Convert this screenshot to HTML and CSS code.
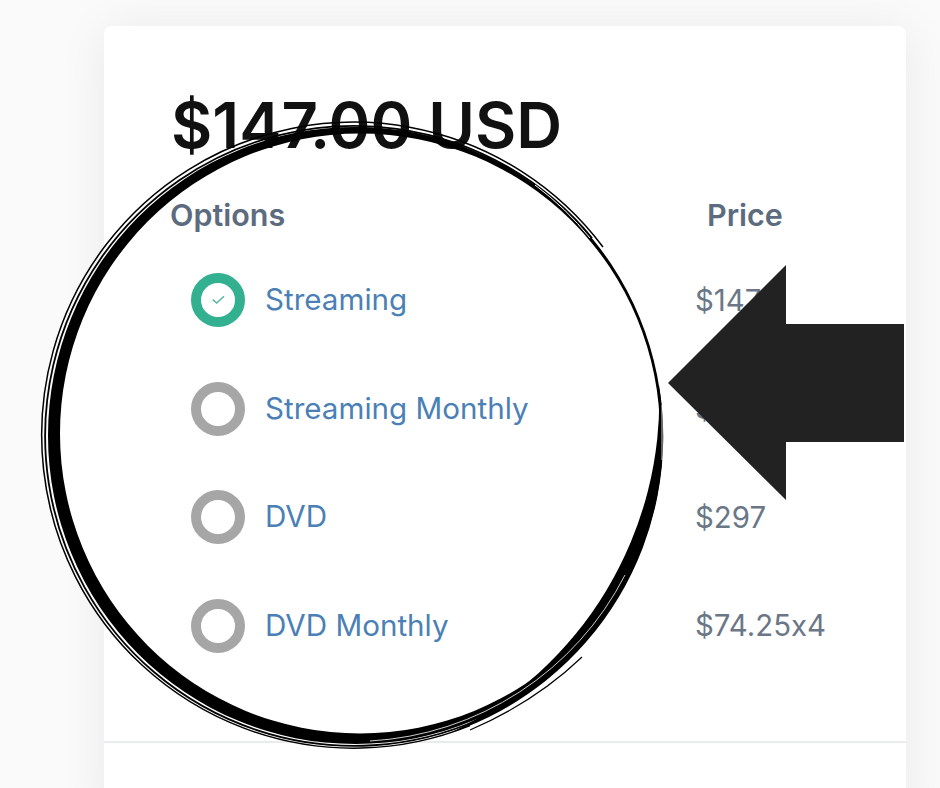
FILE: index.html
```html
<!DOCTYPE html>
<html lang="en">

<head>
    <meta charset="UTF-8">
    <title>Checkout options</title>
    <link rel="stylesheet" href="styles.css">
</head>

<body>
    <div class="spot"></div>

    <div class="card">
        <div class="card-body">
            <h1 class="total">$147.00 USD</h1>

            <div class="options">
                <div class="head">Options</div>
                <div class="head head-price">Price</div>

                <div class="option">
                    <span class="radio radio-on">
                        <svg width="14" height="12" viewBox="0 0 14 12">
                            <path d="M1.7 5.7 L5.7 9 L13 2.3" fill="none" stroke="#58b69d" stroke-width="1.5" />
                        </svg>
                    </span>
                    <span class="option-name">Streaming</span>
                </div>
                <div class="price">$147</div>

                <div class="option">
                    <span class="radio"></span>
                    <span class="option-name">Streaming Monthly</span>
                </div>
                <div class="price">$</div>

                <div class="option">
                    <span class="radio"></span>
                    <span class="option-name">DVD</span>
                </div>
                <div class="price">$297</div>

                <div class="option">
                    <span class="radio"></span>
                    <span class="option-name">DVD Monthly</span>
                </div>
                <div class="price">$74.25x4</div>
            </div>
        </div>
        <div class="divider"></div>
    </div>

    <!-- hand drawn ring and arrow sit on top of the card -->
    <svg class="markup" width="940" height="788" viewBox="0 0 940 788">
        <!-- main brush stroke, thin at upper right and heavy at lower left -->
        <path fill-rule="evenodd" fill="#000"
            d="M48 435.5 A307.5 308.5 0 1 1 663 435.5 A307.5 308.5 0 1 1 48 435.5 Z
               M60 433.5 A300 300 0 1 0 660 433.5 A300 300 0 1 0 60 433.5 Z" />
        <!-- loose outer hairlines -->
        <path d="M603 247 A312 313 0 1 0 470 725.6" fill="none" stroke="#000" stroke-width="1.5" />
        <path d="M592 238 A309 310 0 1 0 480 719" fill="none" stroke="#000" stroke-width="1.8" />
        <path d="M659 385 A313 313 0 0 1 450 733 A370 370 0 0 0 659 385 Z" fill="#000" />
        <path d="M582 657 Q535 702 470 730" fill="none" stroke="#000" stroke-width="1.2" />
        <!-- white gaps inside the stroke -->
        <path d="M535 185 A304 304 0 0 1 590 238" fill="none" stroke="#fff" stroke-width="1" />
        <path d="M625 575 A306 306 0 0 1 370 741" fill="none" stroke="#fff" stroke-width="0.8" />
        <path d="M662 405 V460" fill="none" stroke="#fff" stroke-width="0.8" />
        <path d="M668 383 L786 265 V324 H904 V442 H786 V500 Z" fill="#222" />
    </svg>
</body>

</html>
```

FILE: styles.css
```css
body {
    font-family: Inter, "Liberation Sans", sans-serif;
    font-feature-settings: "calt" 0;
    background-color: #fafafa;
    margin: 0;
    height: 788px;
    overflow: hidden;
    position: relative;
}

.card {
    background-color: #fff;
    border-radius: 8px;
    box-shadow: 0 4px 50px rgba(0, 0, 0, 0.07);
    margin: 26px 34px 0 104px;
    height: 800px;
}

.card-body {
    position: relative;
    z-index: 1;
    padding: 63px 66px 0 66px;
    height: 653px;
    box-sizing: border-box;
}

.spot {
    position: absolute;
    left: 55px;
    top: 130px;
    width: 608px;
    height: 608px;
    border-radius: 50%;
    background-color: #fff;
    z-index: 0;
}

.total {
    margin: 0 0 0 1px;
    font-size: 63.5px;
    line-height: 72px;
    font-weight: 600;
    color: #111;
}

.options {
    display: grid;
    grid-template-columns: 525px 1fr;
    grid-template-rows: 57px;
    grid-auto-rows: 108.5px;
    margin-top: 28px;
}

.head {
    font-size: 30.5px;
    font-weight: 600;
    color: #5d6b7e;
    padding-top: 7px;
}

.head-price {
    padding-left: 12px;
}

.option {
    display: flex;
    align-items: center;
    gap: 20px;
    padding-left: 21px;
}

.option-name {
    font-size: 29.6px;
    color: #4a80b5;
    margin-top: -2px;
}

.radio {
    width: 54px;
    height: 54px;
    box-sizing: border-box;
    border: 10px solid #a6a6a6;
    border-radius: 50%;
    display: flex;
    align-items: center;
    justify-content: center;
}

.radio-on {
    border-color: #33b08f;
}

.price {
    font-size: 29.4px;
    color: #6b7786;
    display: flex;
    align-items: center;
}

.divider {
    height: 2px;
    background-color: #e9ebee;
    margin-top: 62px;
}

.markup {
    position: absolute;
    left: 0;
    top: 0;
    z-index: 2;
}
```
